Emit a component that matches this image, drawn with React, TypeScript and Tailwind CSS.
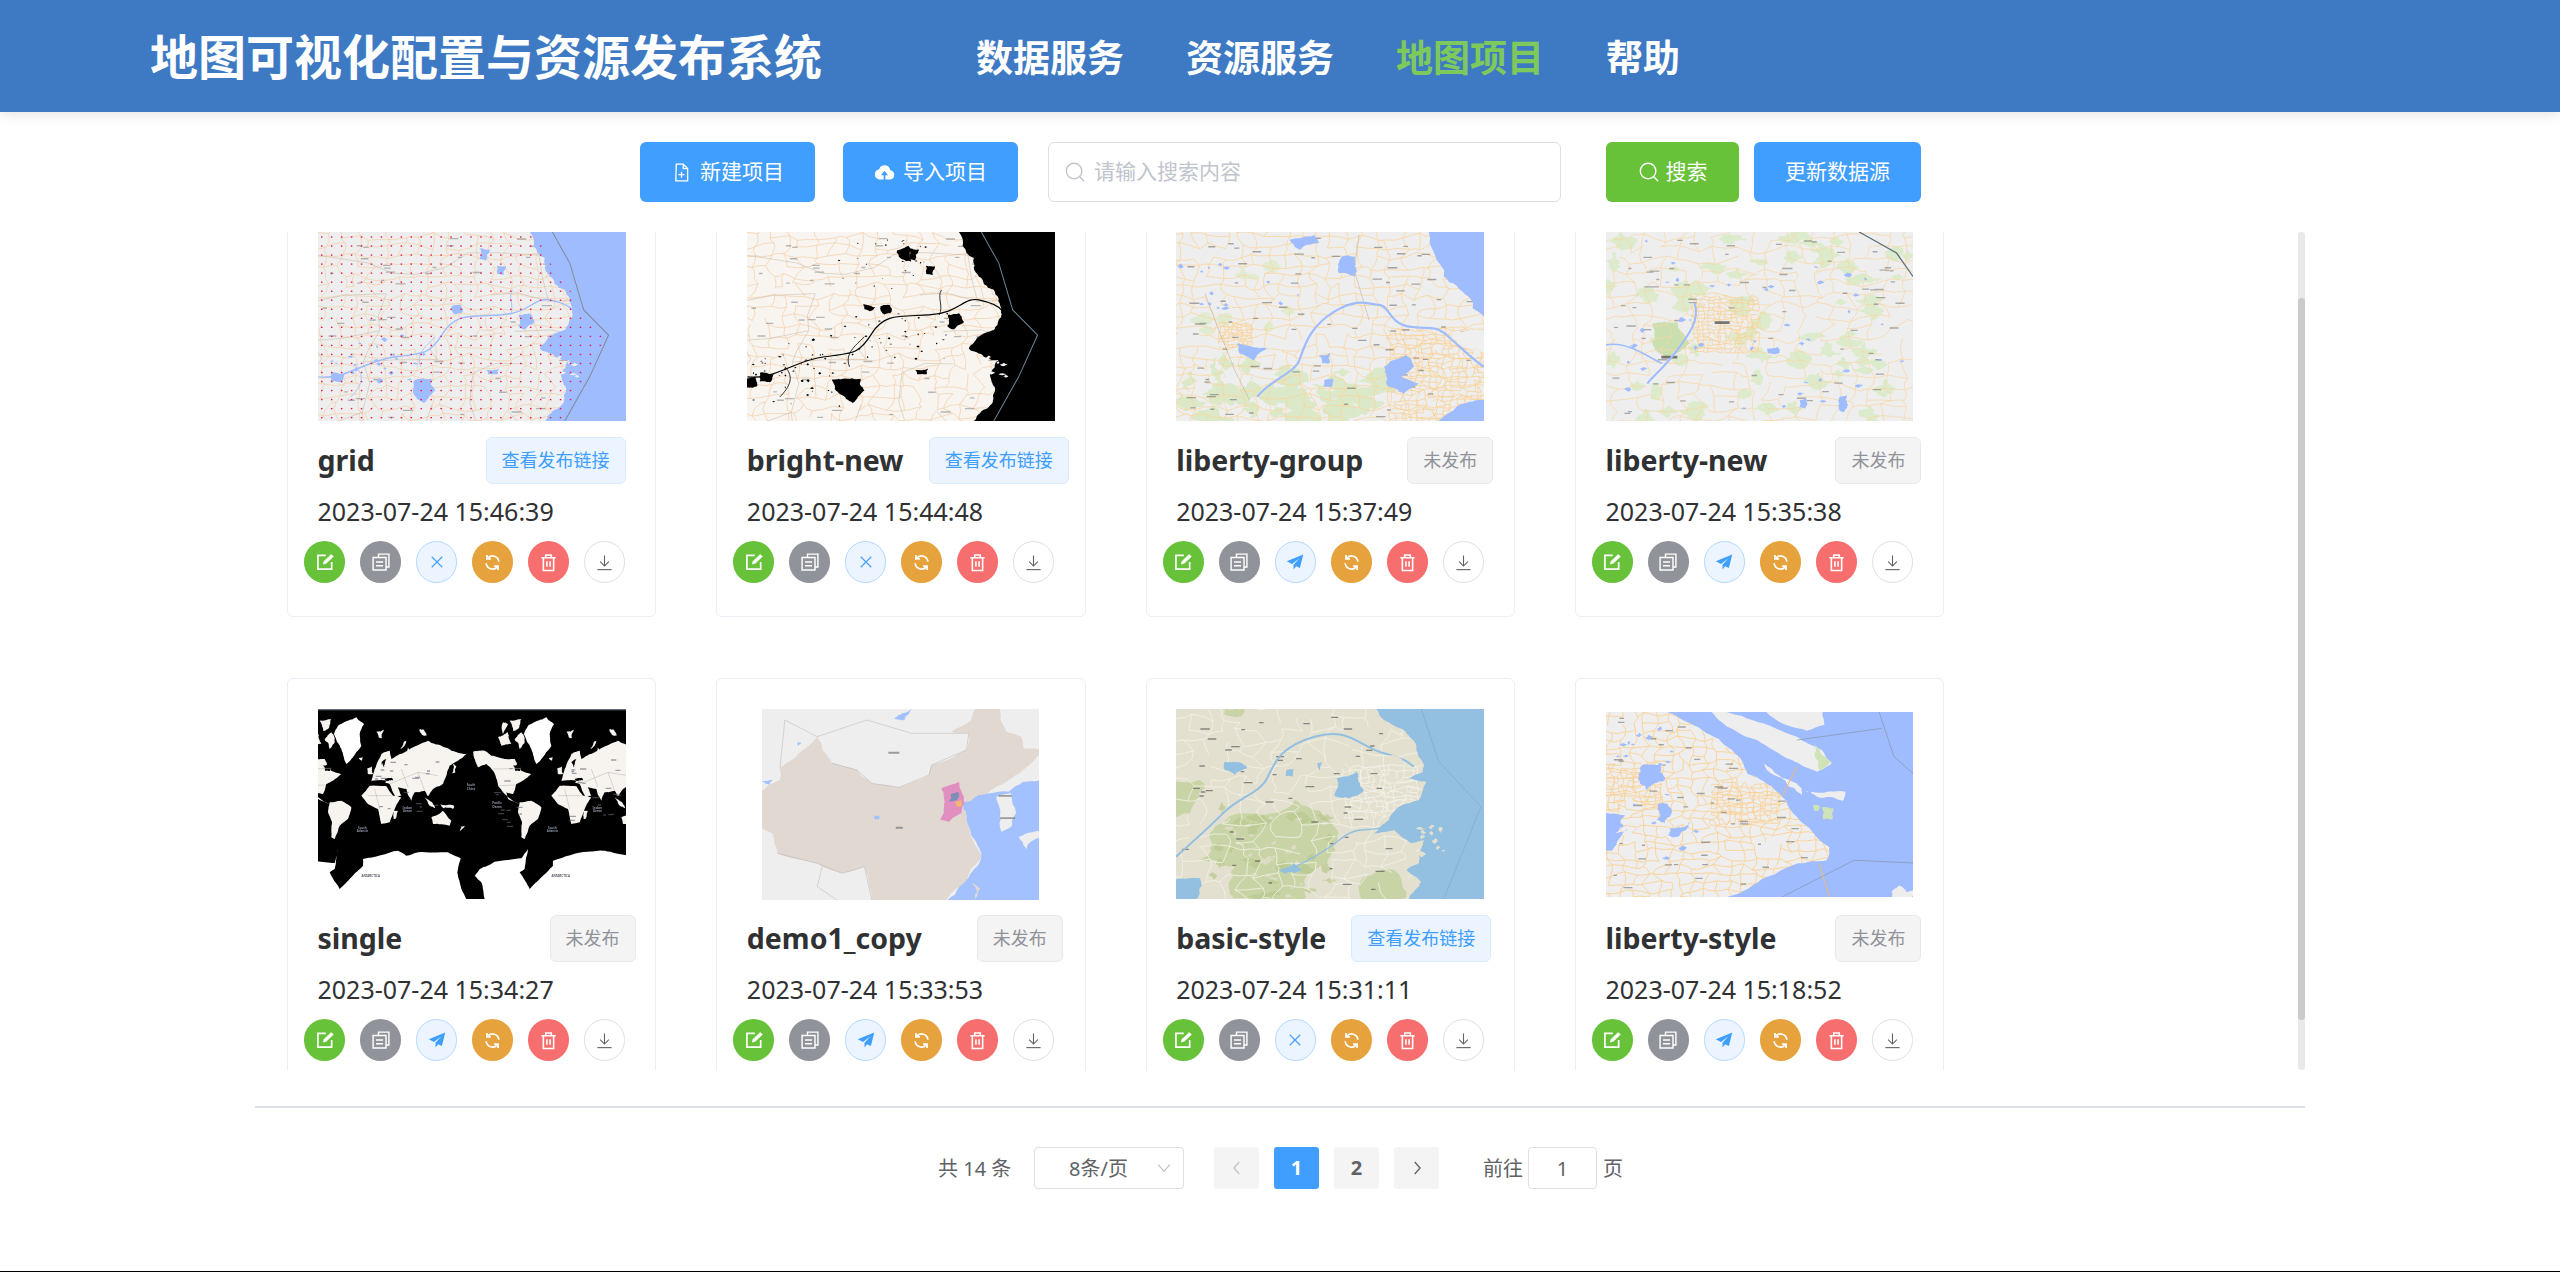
import type { ReactNode } from 'react'

type Action = 'close' | 'send'

type Project = {
  name: string
  date: string
  published: boolean
  action: Action
  rowWidth: string
  thumb: ReactNode
}

function rng(seed: number) {
  let s = seed
  return () => {
    s = (s * 1664525 + 1013904223) % 4294967296
    return s / 4294967296
  }
}

function hash(text: string) {
  let h = 7
  for (let i = 0; i < text.length; i++) h = (h * 31 + text.charCodeAt(i)) % 1000003
  return h
}

// midpoint displacement so that hand-placed outlines read as coasts; long edges stay straight (frame edges)
function rough(pts: string, detail = 0.14) {
  const r = rng(hash(pts))
  let list = pts.trim().split(/\s+/).map((p) => p.split(',').map(Number))
  for (let pass = 0; pass < 3; pass++) {
    const next: number[][] = []
    list.forEach((a, i) => {
      const b = list[(i + 1) % list.length]
      next.push(a)
      const dx = b[0] - a[0]
      const dy = b[1] - a[1]
      const len = Math.hypot(dx, dy)
      if (len > 5 && len < 230) {
        const k = (r() - 0.5) * detail * 2
        next.push([(a[0] + b[0]) / 2 - dy * k, (a[1] + b[1]) / 2 + dx * k])
      }
    })
    list = next
  }
  return list.map((p) => `${p[0].toFixed(1)},${p[1].toFixed(1)}`).join(' ')
}

function P({ pts, fill, detail }: { pts: string; fill: string; detail?: number }) {
  return <polygon points={rough(pts, detail)} fill={fill} />
}

// jittered grid with some edges dropped and bent, reads as a road network at thumbnail size
function mesh(seed: number, x0: number, y0: number, x1: number, y1: number, cell: number, keep: number) {
  const r = rng(seed)
  const cols = Math.ceil((x1 - x0) / cell)
  const rows = Math.ceil((y1 - y0) / cell)
  const nodes: [number, number][][] = []
  for (let i = 0; i <= cols; i++) {
    nodes[i] = []
    for (let j = 0; j <= rows; j++) {
      nodes[i][j] = [x0 + i * cell + (r() - 0.5) * cell * 0.8, y0 + j * cell + (r() - 0.5) * cell * 0.8]
    }
  }
  const seg = (a: [number, number], b: [number, number]) => {
    const mx = (a[0] + b[0]) / 2 + (r() - 0.5) * cell * 0.3
    const my = (a[1] + b[1]) / 2 + (r() - 0.5) * cell * 0.3
    return `M${a[0].toFixed(1)} ${a[1].toFixed(1)}L${mx.toFixed(1)} ${my.toFixed(1)}L${b[0].toFixed(1)} ${b[1].toFixed(1)}`
  }
  let d = ''
  for (let i = 0; i <= cols; i++) {
    for (let j = 0; j <= rows; j++) {
      if (i < cols && r() < keep) d += seg(nodes[i][j], nodes[i + 1][j])
      if (j < rows && r() < keep) d += seg(nodes[i][j], nodes[i][j + 1])
    }
  }
  return d
}

// small dark dashes standing in for the illegible place labels of the thumbnails
function marks(seed: number, x0: number, y0: number, x1: number, y1: number, n: number) {
  const r = rng(seed)
  let d = ''
  for (let i = 0; i < n; i++) {
    const x = x0 + r() * (x1 - x0)
    const y = y0 + r() * (y1 - y0)
    const w = 6 + r() * 14
    d += `M${x.toFixed(0)} ${y.toFixed(0)}h${w.toFixed(0)}v4h-${w.toFixed(0)}z`
  }
  return d
}

function Spots({ seed, x0, y0, x1, y1, n, size, fill, opacity = 1 }: { seed: number; x0: number; y0: number; x1: number; y1: number; n: number; size: number; fill: string; opacity?: number }) {
  const r = rng(seed)
  const out: ReactNode[] = []
  for (let i = 0; i < n; i++) {
    const cx = x0 + r() * (x1 - x0)
    const cy = y0 + r() * (y1 - y0)
    const s = size * (0.3 + r() * 0.9)
    const t = size * (0.3 + r() * 0.9)
    out.push(<P key={i} pts={`${cx - s},${cy} ${cx},${cy - t} ${cx + s},${cy} ${cx},${cy + t}`} fill={fill} detail={0.28} />)
  }
  return <g opacity={opacity}>{out}</g>
}

function Line({ d, color, width = 1, opacity = 1 }: { d: string; color: string; width?: number; opacity?: number }) {
  return <path d={d} fill="none" stroke={color} strokeWidth={width} opacity={opacity} vectorEffect="non-scaling-stroke" />
}

function MapSvg({ box, className, children }: { box: string; className: string; children: ReactNode }) {
  return (
    <svg viewBox={box} preserveAspectRatio="none" className={`block blur-[0.35px] ${className}`}>
      {children}
    </svg>
  )
}

const EAST_SEA = '460,37 490,115 500,170 530,210 545,265 540,300 530,330 500,350 480,385 510,410 540,420 525,480 530,520 520,560 490,602 490,640 700,640 700,20 460,20'
const EAST_RIVER = 'M35 470C90 480 130 420 190 410S260 400 285 340S340 290 400 285S470 230 500 240S540 260 545 270'
const EAST_BORDER = 'M505 37L540 130L568 270L618 345L580 470L530 602'

function EastChina({ land, water, road, border, riverWidth, spotSize }: { land: string; water: string; road: string; border: string; riverWidth: number; spotSize: number }) {
  return (
    <>
      <rect x="34" y="37" width="619" height="565" fill={land} />
      <Line d={mesh(11, 20, 20, 560, 620, 30, 0.78)} color={road} width={0.7} />
      <Line d={mesh(12, 20, 20, 560, 620, 110, 0.35)} color="#b7a38d" width={0.7} opacity={0.55} />
      <path d={marks(13, 40, 50, 520, 590, 54)} fill="#777" opacity={0.5} />
      <Line d={EAST_RIVER} color={water} width={riverWidth} />
      <Line d="M240 440C230 400 250 380 270 350M420 285C430 260 415 230 425 210M110 440C130 470 120 500 100 530" color={water} width={0.8} />
      <P pts={EAST_SEA} fill={water} />
      <P pts="438,285 460,280 470,305 450,328 436,318" fill={water} />
      <P pts="228,480 262,476 270,510 246,548 226,520" fill={water} />
      <P pts="302,260 322,256 322,280 310,284" fill={water} />
      <P pts="394,138 412,140 408,165 394,162" fill={water} />
      <P pts="358,85 380,90 372,122 358,118" fill={water} />
      <P pts="60,458 88,462 80,486 60,484" fill={water} />
      <P pts="372,450 398,445 395,462 376,462" fill={water} />
      <Spots seed={14} x0={60} y0={330} x1={260} y1={520} n={22} size={spotSize} fill={water} />
      <Spots seed={15} x0={505} y0={400} x1={560} y1={470} n={9} size={7} fill={land} />
      <Line d={EAST_BORDER} color={border} />
    </>
  )
}

function GridThumb() {
  const dots: ReactNode[] = []
  for (let y = 50; y < 602; y += 27) {
    for (let x = 40; x < 620; x += 20) {
      dots.push(<rect key={`${x}-${y}`} x={x} y={y} width="3" height="4" fill="#ee1144" />)
    }
  }
  return (
    <MapSvg box="34 37 619 565" className="w-[308px] h-[189px]">
      <EastChina land="#eeeeee" water="#9fbcff" road="#f5cfa5" border="#7f8b99" riverWidth={1.4} spotSize={7} />
      <clipPath id="grid-area">
        <polygon points="34,37 470,37 505,140 545,220 560,270 612,345 575,470 525,602 34,602" />
      </clipPath>
      <g clipPath="url(#grid-area)">{dots}</g>
    </MapSvg>
  )
}

function BrightThumb() {
  return (
    <MapSvg box="34 37 619 565" className="w-[309px] h-[189px]">
      <EastChina land="#f8f5f0" water="#000000" road="#f3cda6" border="#6d8494" riverWidth={1.2} spotSize={4} />
      <Spots seed={71} x0={230} y0={280} x1={440} y1={420} n={36} size={3} fill="#000" />
      <Spots seed={72} x0={200} y0={60} x1={400} y1={220} n={26} size={2.5} fill="#000" />
      <Spots seed={73} x0={40} y0={400} x1={220} y1={560} n={30} size={3} fill="#000" />
      <P pts="335,95 358,78 364,125 345,118" fill="#000" />
      <P pts="268,252 292,262 280,274 270,268" fill="#000" />
      <P pts="205,478 240,476 254,515 230,528 210,505" fill="#000" />
      <P pts="34,475 50,470 54,498 34,502" fill="#000" />
    </MapSvg>
  )
}

function GroupThumb() {
  return (
    <MapSvg box="52 37 619 565" className="w-[308px] h-[189px]">
      <rect x="52" y="37" width="619" height="565" fill="#eeeeee" />
      <Spots seed={25} x0={60} y0={430} x1={480} y1={600} n={34} size={40} fill="#dbe9c9" />
      <Spots seed={26} x0={100} y0={120} x1={300} y1={400} n={10} size={22} fill="#e0ecd2" />
      <Line d={mesh(21, 30, 20, 690, 620, 30, 0.82)} color="#fbd498" width={0.75} />
      <Line d={mesh(22, 480, 330, 680, 600, 14, 0.85)} color="#fbcf8f" width={0.75} />
      <Line d={mesh(23, 140, 310, 200, 380, 9, 0.9)} color="#fbcf8f" width={0.75} />
      <Line d="M420 45L410 150L440 300M110 220L130 300L170 450L200 540" color="#b9a58e" width={0.8} opacity={0.6} />
      <path d={marks(24, 60, 45, 660, 590, 80)} fill="#666" opacity={0.55} />
      <Line d="M215 530C240 480 290 460 300 420S320 320 370 275S440 255 460 255S480 310 520 320S570 310 600 350S650 420 671 440" color="#9fbcff" width={2.2} />
      <P pts="560,37 590,170 640,230 671,290 700,290 700,20 560,20" fill="#9fbcff" />
      <P pts="671,540 640,545 610,570 580,602 580,630 700,630 700,540" fill="#9fbcff" />
      <P pts="470,440 515,405 530,440 505,470 540,490 510,520 480,500" fill="#9fbcff" />
      <P pts="175,370 205,380 235,385 210,420 180,400" fill="#9fbcff" />
      <P pts="280,60 330,45 340,70 300,90" fill="#9fbcff" />
      <P pts="385,110 412,110 412,170 380,160" fill="#9fbcff" />
      <P pts="340,405 362,400 360,430 345,430" fill="#9fbcff" />
      <P pts="350,480 368,475 365,500 350,500" fill="#9fbcff" />
      <Spots seed={27} x0={60} y0={120} x1={300} y1={300} n={14} size={7} fill="#9fbcff" />
      <P pts="600,340 671,330 671,400 630,380" fill="#efefef" />
    </MapSvg>
  )
}

function NewThumb() {
  return (
    <MapSvg box="917 37 616 565" className="w-[307px] h-[189px]">
      <rect x="917" y="37" width="616" height="565" fill="#eeeeee" />
      <Spots seed={34} x0={920} y0={40} x1={1530} y1={600} n={70} size={28} fill="#dcebcb" />
      <P pts="1010,310 1060,305 1085,370 1040,410 1010,370" fill="#c9dfb0" />
      <Line d={mesh(31, 900, 20, 1550, 620, 34, 0.74)} color="#f8d7a4" width={0.75} />
      <Line d={mesh(32, 1090, 230, 1220, 390, 11, 0.85)} color="#fbcf8f" width={0.75} />
      <path d={marks(33, 925, 45, 1520, 590, 70)} fill="#666" opacity={0.5} />
      <path d="M1135 304h30v8h-30zM1028 407h32v8h-32z" fill="#444" opacity={0.7} />
      <Line d="M1095 250C1105 300 1085 340 1060 390S1010 470 1000 490" color="#9fbcff" width={2} />
      <Line d="M917 375C960 360 1010 420 1030 430" color="#9fbcff" width={1.6} />
      <Spots seed={35} x0={920} y0={60} x1={1520} y1={590} n={40} size={7} fill="#9fbcff" />
      <P pts="1240,385 1262,380 1265,398 1243,400" fill="#9fbcff" />
      <P pts="1305,540 1320,535 1318,565 1305,560" fill="#9fbcff" />
      <P pts="1385,530 1400,525 1395,575 1385,570" fill="#9fbcff" />
      <Line d="M1425 37L1500 100L1533 170" color="#5c6b78" width={1.2} />
    </MapSvg>
  )
}

function WorldShapes() {
  return (
    <>
      <P pts="90,35 115,25 138,45 125,75 130,110 100,150 85,165 70,120 48,75 60,50" fill="#ffffff" detail={0.06} />
      <P pts="160,215 170,180 190,135 215,125 220,150 270,125 330,95 370,110 400,125 445,135 420,155 395,170 385,200 375,225 345,240 330,262 320,245 290,250 280,275 265,240 240,235 250,260 235,265 215,225 190,215" fill="#f7f4ef" detail={0.06} />
      <P pts="130,260 155,230 205,232 225,260 250,265 230,300 215,340 190,345 180,300 150,285" fill="#f7f4ef" detail={0.04} />
      <P pts="340,325 375,305 400,335 395,350 345,345" fill="#f7f4ef" detail={0.06} />
      <P pts="465,128 500,125 520,140 560,150 590,150 600,170 610,185 640,195 615,215 595,225 585,255 565,250 570,270 605,285 590,280 560,255 540,230 525,185 505,165 480,175 470,150" fill="#f7f4ef" detail={0.05} />
      <P pts="605,280 640,275 670,295 660,330 635,350 620,390 610,385 612,340 600,310" fill="#f7f4ef" detail={0.04} />
      <P pts="575,35 610,30 600,60 585,65" fill="#f7f4ef" />
      <P pts="540,85 570,70 580,105 550,110" fill="#f7f4ef" />
      <P pts="590,90 610,70 620,100 605,120" fill="#f7f4ef" />
      <P pts="555,40 570,45 555,75" fill="#f7f4ef" />
      <P pts="175,68 198,62 192,88 182,85" fill="#f7f4ef" />
      <P pts="305,60 318,62 325,80 312,78" fill="#f7f4ef" />
      <P pts="245,120 258,98 268,92 255,115" fill="#f7f4ef" />
      <P pts="270,115 275,125 268,135" fill="#f7f4ef" />
      <P pts="148,178 162,172 165,195 150,195" fill="#f7f4ef" />
      <P pts="122,148 135,145 132,155" fill="#f7f4ef" />
      <P pts="405,165 415,172 412,190 402,192" fill="#f7f4ef" />
      <P pts="228,305 240,305 232,330 226,328" fill="#f7f4ef" />
      <P pts="320,265 345,285 352,298 335,290" fill="#f7f4ef" />
      <P pts="365,285 408,290 405,300 375,298" fill="#f7f4ef" />
      <P pts="430,352 440,350 425,368" fill="#f7f4ef" />
      <P pts="355,222 368,218 372,228 360,232" fill="#f7f4ef" />
      <P pts="585,170 605,165 606,186 592,186" fill="#000" />
      <P pts="200,210 222,206 226,214 204,216" fill="#000" />
      <P pts="165,218 205,216 200,226 170,225" fill="#000" />
      <P pts="190,160 205,150 198,175" fill="#000" />
      <Line d="M215 225L300 190L360 200M250 180L270 235M300 190L320 245M150 260L220 260M170 240L185 300M525 180L610 178M540 230L590 228" color="#b5b2ac" width={0.5} />
    </>
  )
}

function SingleThumb() {
  const label = { fontSize: 9, textAnchor: 'middle' as const, fontWeight: 600 }
  return (
    <MapSvg box="0 0 924 570" className="w-[308px] h-[190px]">
      <rect x="0" y="0" width="924" height="570" fill="#000" />
      <g transform="translate(570 0)">
        <WorldShapes />
      </g>
      <WorldShapes />
      <g transform="translate(-570 0)">
        <WorldShapes />
      </g>
      <rect x="0" y="0" width="924" height="4" fill="#5f6b7a" />
      <P pts="-5,458 50,462 60,420 50,480 35,490 65,540 100,505 135,470 135,450 240,425 265,440 300,430 390,430 428,448 418,490 430,540 445,570 500,570 490,520 470,500 485,480 530,458 610,448 630,420 620,480 605,490 635,540 670,505 705,470 705,455 810,428 860,425 930,440 930,580 -5,580" fill="#ffffff" detail={0.04} />
      <g fill="#4a4a55" style={label}>
        <text x="158" y="503">ANTARCTICA</text>
        <text x="728" y="503">ANTARCTICA</text>
      </g>
      <g fill="#9aa3b5" style={label}>
        <text x="268" y="300">Indian</text>
        <text x="268" y="310">Ocean</text>
        <text x="838" y="300">Indian</text>
        <text x="838" y="310">Ocean</text>
        <text x="537" y="285">Pacific</text>
        <text x="537" y="296">Ocean</text>
        <text x="459" y="232">South</text>
        <text x="459" y="242">China</text>
        <text x="133" y="360">South</text>
        <text x="133" y="370">Atlantic</text>
        <text x="703" y="360">South</text>
        <text x="703" y="370">Atlantic</text>
      </g>
      <path d={marks(43, 160, 150, 380, 340, 20)} fill="#667" opacity={0.6} />
      <path d={marks(44, 525, 160, 660, 360, 12)} fill="#667" opacity={0.6} />
      <path d={marks(45, 730, 150, 920, 340, 18)} fill="#667" opacity={0.6} />
    </MapSvg>
  )
}

function DemoThumb() {
  return (
    <MapSvg box="929 27 557 573" className="w-[277px] h-[191px]">
      <rect x="929" y="27" width="557" height="573" fill="#eeeeee" />
      <P pts="915,285 965,240 965,205 1000,165 1040,110 1070,190 1120,210 1150,250 1205,262 1265,225 1270,195 1340,150 1345,100 1310,95 1350,60 1360,15 1405,15 1420,95 1450,110 1455,145 1500,150 1470,190 1440,225 1400,260 1360,310 1340,345 1345,380 1370,470 1340,540 1285,620 1150,620 1135,500 1090,520 1040,490 960,460 950,400 915,370" fill="#e2d8d2" detail={0.06} />
      <P pts="1500,235 1455,245 1425,275 1365,285 1345,310 1340,345 1345,380 1370,470 1340,540 1285,620 1500,620" fill="#a3c1ff" detail={0.08} />
      <P pts="1330,310 1365,285 1375,310 1345,345" fill="#a3c1ff" />
      <P pts="1400,290 1430,280 1440,340 1430,380 1410,395 1408,345" fill="#eeeeee" detail={0.08} />
      <P pts="1445,410 1500,385 1500,400 1460,450" fill="#eeeeee" />
      <P pts="1352,550 1368,565 1358,597" fill="#e2d8d2" />
      <P pts="1290,265 1325,245 1335,290 1330,340 1305,365 1288,360 1295,320" fill="#e08fc0" detail={0.08} />
      <P pts="1308,285 1322,275 1322,300 1305,305" fill="#7d8fb8" />
      <P pts="1318,305 1330,300 1330,320 1320,320" fill="#f4b86a" />
      <P pts="1195,55 1230,27 1215,60" fill="#a3c1ff" />
      <P pts="929,245 950,240 945,255" fill="#a3c1ff" />
      <P pts="1000,125 1008,128 1002,140" fill="#a3c1ff" />
      <P pts="1155,347 1165,347 1165,357 1155,357" fill="#a3c1ff" />
      <Line d="M965 205L975 60L1040 110M1070 190L1120 210L1150 250L1205 262L1265 225L1270 195L1340 150L1345 100L1230 100L1140 60L1080 90L1040 110" color="#b3b3b3" width={0.7} opacity={0.7} />
      <Line d="M960 460L1040 490L1090 520L1135 500L1150 600M1050 500L1040 560L1080 600" color="#b3b3b3" width={0.7} opacity={0.7} />
      <path d="M1183 155h22v6h-22zM1198 380h14v6h-14zM1405 285h26v5h-26zM1408 352h30v5h-30z" fill="#777" opacity={0.7} />
    </MapSvg>
  )
}

function BasicThumb() {
  return (
    <MapSvg box="52 27 619 570" className="w-[308px] h-[190px]">
      <rect x="52" y="27" width="619" height="570" fill="#e3e0d0" />
      <P pts="120,400 180,340 290,300 350,350 370,430 340,500 300,620 190,620 170,500 100,480" fill="#c9d4a6" detail={0.2} />
      <P pts="40,230 100,240 80,340 40,360" fill="#c9d4a6" detail={0.2} />
      <P pts="150,27 190,27 180,50 150,45" fill="#c9d4a6" />
      <P pts="430,530 490,510 510,620 420,620" fill="#c9d4a6" />
      <Spots seed={54} x0={120} y0={320} x1={360} y1={590} n={30} size={18} fill="#b9c98e" opacity={0.7} />
      <Spots seed={55} x0={130} y0={350} x1={350} y1={590} n={26} size={9} fill="#e3e0d0" opacity={0.7} />
      <Line d={mesh(51, 40, 20, 560, 600, 36, 0.65)} color="#f4f2e8" width={0.8} />
      <Line d={mesh(52, 390, 200, 540, 340, 15, 0.75)} color="#f6f4ec" width={0.8} />
      <path d={marks(53, 60, 40, 540, 590, 50)} fill="#555" opacity={0.65} />
      <Line d="M52 470C90 420 120 380 150 335S220 280 235 235S260 140 330 110S420 140 470 160S520 190 530 200" color="#93bfe0" width={2} />
      <Line d="M270 520C300 490 340 470 380 420S440 400 470 380" color="#93bfe0" width={1.5} />
      <P pts="455,27 470,60 510,90 535,135 550,195 548,215 520,235 555,245 540,300 500,320 480,360 450,400 490,390 525,430 550,420 540,490 515,510 545,545 520,597 520,620 700,620 700,10 455,10" fill="#93bfe0" detail={0.08} />
      <P pts="475,165 500,170 545,215 520,200" fill="#e3e0d0" />
      <P pts="150,185 185,190 195,205 170,225 150,210" fill="#93bfe0" />
      <P pts="375,235 415,215 430,270 400,295 370,285" fill="#93bfe0" />
      <P pts="335,190 345,185 340,210" fill="#93bfe0" />
      <P pts="275,210 290,208 288,230 272,228" fill="#93bfe0" />
      <P pts="260,510 290,490 305,510 270,520" fill="#93bfe0" />
      <P pts="40,545 100,535 80,620 40,620" fill="#93bfe0" />
      <Spots seed={56} x0={530} y0={380} x1={590} y1={470} n={12} size={8} fill="#e3e0d0" />
      <Line d="M545 27L580 185L665 320L590 597" color="#84a9c4" width={0.7} />
    </MapSvg>
  )
}

function StyleThumb() {
  return (
    <MapSvg box="917 36 616 554" className="w-[307px] h-[185px]">
      <rect x="917" y="36" width="616" height="554" fill="#eeeeee" />
      <Line d={mesh(61, 900, 20, 1400, 600, 24, 0.84)} color="#fbd08f" width={0.85} />
      <Line d={mesh(62, 917, 190, 1020, 320, 14, 0.8)} color="#fbcf8f" width={0.75} />
      <Line d={mesh(63, 1130, 250, 1260, 370, 12, 0.85)} color="#fbcf8f" width={0.75} />
      <path d={marks(64, 925, 45, 1350, 580, 60)} fill="#666" opacity={0.55} />
      <P pts="1040,36 1110,90 1170,150 1200,220 1250,260 1300,350 1365,440 1360,480 1300,490 1240,530 1160,590 1160,620 1560,620 1560,10 1040,10" fill="#9fbcff" detail={0.07} />
      <P pts="1120,20 1210,60 1300,110 1350,150 1370,190 1340,215 1290,180 1220,120 1160,80" fill="#eeeeee" detail={0.05} />
      <P pts="1225,20 1350,20 1355,75 1320,92 1270,70" fill="#eeeeee" detail={0.05} />
      <P pts="1330,125 1370,185 1345,210 1335,160" fill="#cfe3b8" />
      <P pts="1235,190 1300,250 1310,285 1280,250" fill="#eeeeee" />
      <P pts="1310,270 1398,275 1392,302 1340,290" fill="#eeeeee" />
      <P pts="1348,322 1374,325 1372,358 1352,358" fill="#cfe3b8" />
      <P pts="1332,314 1344,316 1344,332 1334,332" fill="#cfe3b8" />
      <P pts="1490,575 1505,555 1520,575 1533,570 1533,600 1490,600" fill="#eeeeee" />
      <P pts="900,330 955,345 935,400 960,385 930,450 900,445" fill="#9fbcff" />
      <P pts="990,195 1030,190 1035,240 1000,270 985,250" fill="#9fbcff" detail={0.2} />
      <P pts="1020,315 1040,310 1035,370 1018,360" fill="#9fbcff" detail={0.2} />
      <P pts="1045,385 1085,365 1060,410 1040,405" fill="#9fbcff" detail={0.2} />
      <Spots seed={65} x0={925} y0={60} x1={1100} y1={480} n={18} size={7} fill="#9fbcff" />
      <Line d="M1465 36L1495 170L1533 220M1270 590L1415 480L1533 488M1300 120L1470 85" color="#8a93a6" width={0.7} />
      <Line d="M1345 490L1365 590M1300 200L1270 290" color="#f3b877" width={1} />
    </MapSvg>
  )
}

const PROJECTS: Project[] = [
  { name: 'grid', date: '2023-07-24 15:46:39', published: true, action: 'close', rowWidth: 'w-[308px]', thumb: <GridThumb /> },
  { name: 'bright-new', date: '2023-07-24 15:44:48', published: true, action: 'close', rowWidth: 'w-[322px]', thumb: <BrightThumb /> },
  { name: 'liberty-group', date: '2023-07-24 15:37:49', published: false, action: 'send', rowWidth: 'w-[317px]', thumb: <GroupThumb /> },
  { name: 'liberty-new', date: '2023-07-24 15:35:38', published: false, action: 'send', rowWidth: 'w-[316px]', thumb: <NewThumb /> },
  { name: 'single', date: '2023-07-24 15:34:27', published: false, action: 'send', rowWidth: 'w-[318px]', thumb: <SingleThumb /> },
  { name: 'demo1_copy', date: '2023-07-24 15:33:53', published: false, action: 'send', rowWidth: 'w-[316px]', thumb: <DemoThumb /> },
  { name: 'basic-style', date: '2023-07-24 15:31:11', published: true, action: 'close', rowWidth: 'w-[315px]', thumb: <BasicThumb /> },
  { name: 'liberty-style', date: '2023-07-24 15:18:52', published: false, action: 'send', rowWidth: 'w-[316px]', thumb: <StyleThumb /> },
]

function Icon({ children, className = 'w-[19px] h-[19px]', width = 1.8 }: { children: ReactNode; className?: string; width?: number }) {
  return (
    <svg viewBox="0 0 24 24" fill="none" stroke="currentColor" strokeWidth={width} className={className}>
      {children}
    </svg>
  )
}

function SearchIcon({ className }: { className: string }) {
  return (
    <Icon className={className} width={1.5}>
      <circle cx="11" cy="11" r="8.5" />
      <path d="M17.5 17.5L21.5 21.5" strokeLinecap="round" />
    </Icon>
  )
}

const CIRCLE = 'w-[41px] h-[42px] rounded-full flex items-center justify-center shrink-0'

function ActionRow({ action }: { action: Action }) {
  return (
    <div className="flex gap-[15px] mt-[12px] -ml-[13.5px]">
      <button className={`${CIRCLE} bg-[#67c23a] text-white`}>
        <Icon width={2} className="w-[20px] h-[20px]">
          <path d="M13 4H3.5v16.5H20V12" />
          <path d="M10 14.5l1-3.5 8.5-8 2.5 2.5-8.5 8z" fill="currentColor" strokeWidth={0.8} />
        </Icon>
      </button>
      <button className={`${CIRCLE} bg-[#909399] text-white`}>
        <Icon width={1.7} className="w-[20px] h-[20px]">
          <path d="M9 6V2.5h12.5V18H18" />
          <path d="M2.5 6.5H18v15H2.5z" />
          <path d="M6 12h8.5M6 16.5h8.5" />
        </Icon>
      </button>
      <button className={`${CIRCLE} bg-[#ecf5ff] border border-[#b3d8ff] text-[#409eff]`}>
        {action === 'close' ? (
          <Icon width={1.5} className="w-[18px] h-[18px]">
            <path d="M5 5l14 14M19 5L5 19" />
          </Icon>
        ) : (
          <svg viewBox="0 0 24 24" fill="currentColor" className="w-[18px] h-[18px]">
            <path d="M23 2L1 11l7 3.5L18 7l-8 8.5V22l3.5-4.5 5 2.5z" />
          </svg>
        )}
      </button>
      <button className={`${CIRCLE} bg-[#e6a23c] text-white`}>
        <Icon width={2.2}>
          <path d="M20 11A8 8 0 0 0 6 6.5" />
          <path d="M4 13a8 8 0 0 0 14 4.5" />
          <path d="M5 2.5V7.5h5M19 21.5v-5h-5" />
        </Icon>
      </button>
      <button className={`${CIRCLE} bg-[#f76e6e] text-white`}>
        <Icon width={2}>
          <path d="M3 6h18M8.5 6V2.5h7V6" />
          <path d="M5.5 6v16h13V6" />
          <path d="M10 10.5v7M14 10.5v7" />
        </Icon>
      </button>
      <button className={`${CIRCLE} bg-white border border-[#dcdfe6] text-[#606266]`}>
        <Icon width={1.4}>
          <path d="M12 3v13M6.5 11l5.5 5.5 5.5-5.5" />
          <path d="M3 21h18" />
        </Icon>
      </button>
    </div>
  )
}

function ProjectCard({ project }: { project: Project }) {
  return (
    <div className="w-[369.33px] h-[417px] shrink-0 bg-white border border-[#ebeef5] rounded-[6px] pt-[30px] pl-[29.5px]">
      <div className="w-[308px] h-[190px] flex items-center justify-center">{project.thumb}</div>
      <div className="w-[308px]">
        <div className={`flex items-center justify-between mt-[16px] ${project.rowWidth}`}>
          <span className="text-[28.5px] font-bold text-[#303133] leading-[47px]">{project.name}</span>
          {project.published ? (
            <span className="w-[140px] h-[47px] shrink-0 flex items-center justify-center bg-[#ecf5ff] border border-[#d9ecff] rounded-[6px] text-[18px] text-[#409eff]">
              查看发布链接
            </span>
          ) : (
            <span className="w-[86px] h-[47px] shrink-0 flex items-center justify-center bg-[#f4f4f5] border border-[#e9e9eb] rounded-[6px] text-[18px] text-[#909399]">
              未发布
            </span>
          )}
        </div>
        <div className="mt-[9px] text-[25px] leading-[36px] text-[#303133] whitespace-nowrap">{project.date}</div>
        <ActionRow action={project.action} />
      </div>
    </div>
  )
}

function Pagination() {
  const pageBtn = 'w-[45px] h-[42px] rounded-[3px] flex items-center justify-center'
  return (
    <div className="mt-[39px] flex items-center text-[20px] text-[#606266] pl-[938px]">
      <span className="w-[75px] whitespace-nowrap pt-[2px]">共 14 条</span>
      <div className="relative ml-[21px] w-[150px] h-[42px] border border-[#dcdfe6] rounded-[4px] flex items-center pl-[34px] pt-[2px]">
        8条/页
        <svg viewBox="0 0 24 24" fill="none" stroke="#c0c4cc" strokeWidth={1.6} className="absolute right-[9px] top-[10px] w-[20px] h-[20px]">
          <path d="M5 8l7 8 7-8" />
        </svg>
      </div>
      <button className={`${pageBtn} ml-[30px] bg-[#f4f4f5] text-[#c0c4cc]`}>
        <Icon width={1.8} className="w-[18px] h-[18px]">
          <path d="M15 4l-7 8 7 8" />
        </Icon>
      </button>
      <button className={`${pageBtn} ml-[15px] bg-[#409eff] text-white font-bold`}>1</button>
      <button className={`${pageBtn} ml-[15px] bg-[#f4f4f5] font-bold`}>2</button>
      <button className={`${pageBtn} ml-[15px] bg-[#f4f4f5]`}>
        <Icon width={1.8} className="w-[18px] h-[18px]">
          <path d="M9 4l7 8-7 8" />
        </Icon>
      </button>
      <span className="ml-[44px] whitespace-nowrap pt-[2px]">前往</span>
      <div className="ml-[5px] w-[69px] h-[42px] border border-[#dcdfe6] rounded-[4px] flex items-center justify-center pt-[2px]">1</div>
      <span className="ml-[6px] pt-[2px]">页</span>
    </div>
  )
}

export default function App() {
  return (
    <div className="w-[2560px] h-[1272px] overflow-hidden bg-white border-b border-black font-['Noto_Sans','Noto_Sans_CJK_SC',sans-serif]">
      <header className="relative z-10 h-[112px] bg-[#3e7ac4] shadow-[0_2px_12px_rgba(0,0,0,0.12)] flex items-center pl-[150px] pt-[2px] font-bold text-white">
        <h1 className="text-[48px] leading-none whitespace-nowrap">地图可视化配置与资源发布系统</h1>
        <nav className="ml-[154px] flex gap-[62px] text-[37px] leading-none">
          <a>数据服务</a>
          <a>资源服务</a>
          <a className="text-[#7ec95c]">地图项目</a>
          <a>帮助</a>
        </nav>
      </header>

      <div className="flex pt-[30px] pl-[640px] text-[21px] text-white">
        <button className="w-[175px] h-[60px] bg-[#409eff] rounded-[6px] flex items-center justify-center gap-[8px]">
          <Icon className="w-[21px] h-[21px]" width={1.5}>
            <path d="M6 2.5h8l5 5v14H5.5z" />
            <path d="M14 2.5v5h5M12 11v7M8.5 14.5h7" />
          </Icon>
          新建项目
        </button>
        <button className="ml-[28px] w-[175px] h-[60px] bg-[#409eff] rounded-[6px] flex items-center justify-center gap-[8px]">
          <svg viewBox="0 0 24 24" fill="currentColor" className="w-[21px] h-[21px]">
            <path d="M18.5 9.5a6.5 6.5 0 0 0-12.6-1.3A6 6 0 0 0 6 20h5v-5H8l4-5 4 5h-3v5h5.5a5.3 5.3 0 0 0 0-10.5z" />
          </svg>
          导入项目
        </button>
        <div className="ml-[30px] w-[513px] h-[60px] border border-[#dcdfe6] rounded-[6px] flex items-center pl-[15px] gap-[8px] text-[#c0c4cc]">
          <SearchIcon className="w-[22px] h-[22px]" />
          请输入搜索内容
        </div>
        <button className="ml-[45px] w-[133px] h-[60px] bg-[#67c23a] rounded-[6px] flex items-center justify-center gap-[6px]">
          <SearchIcon className="w-[22px] h-[22px]" />
          搜索
        </button>
        <button className="ml-[15px] w-[167px] h-[60px] bg-[#409eff] rounded-[6px] flex items-center justify-center">更新数据源</button>
      </div>

      <div className="ml-[255px] w-[2050px] mt-[30px] h-[838px] flex overflow-hidden">
        <div className="flex-1 overflow-hidden pl-[32px]">
          <div className="-mt-[32px] flex flex-wrap gap-x-[60px] gap-y-[61px]">
            {PROJECTS.map((p) => (
              <ProjectCard key={p.name} project={p} />
            ))}
          </div>
        </div>
        <div className="w-[7px] h-full bg-[#e9e9e9] rounded-[3px] pt-[66px] pb-[50px]">
          <div className="h-full bg-[#cbcbcb] rounded-[3px]" />
        </div>
      </div>

      <div className="ml-[255px] w-[2050px] mt-[36px] h-[2px] bg-[#dcdfe6]" />
      <Pagination />
    </div>
  )
}
